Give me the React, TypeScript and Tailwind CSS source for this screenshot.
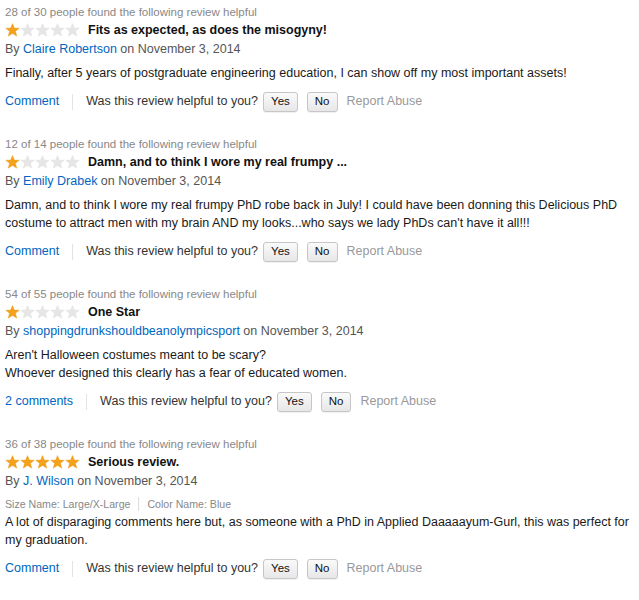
import React from "react";

function Star({ filled }: { filled: boolean }) {
  return (
    <svg width="15" height="14" viewBox="0 0 24 23" className="shrink-0">
      <polygon
        points="12,0.8 15.1,8.2 23.2,8.6 16.9,13.7 19.1,21.6 12,17.1 4.9,21.6 7.1,13.7 0.8,8.6 8.9,8.2"
        fill={filled ? "#f4a21b" : "#e6e6e6"}
        stroke={filled ? "#e59512" : "#dedede"}
        strokeWidth="0.6"
      />
    </svg>
  );
}

function Stars({ n }: { n: number }) {
  return (
    <div className="flex items-center">
      {[0, 1, 2, 3, 4].map((i) => (
        <Star key={i} filled={i < n} />
      ))}
    </div>
  );
}

function Btn({ children }: { children: React.ReactNode }) {
  return (
    <span className="inline-flex h-[20px] items-center rounded-[3px] border border-[#c6c6c6] bg-gradient-to-b from-[#fafafa] to-[#e7e7e7] px-[7px] text-[11.5px] text-[#111] shadow-[0_1px_0_rgba(0,0,0,0.05)]">
      {children}
    </span>
  );
}

type Review = {
  helpful: string;
  stars: number;
  title: string;
  author: string;
  meta?: boolean;
  body: React.ReactNode;
  comment: string;
};

const reviews: Review[] = [
  {
    helpful: "28 of 30 people found the following review helpful",
    stars: 1,
    title: "Fits as expected, as does the misogyny!",
    author: "Claire Robertson",
    body: (
      <>
        Finally, after 5 years of postgraduate engineering education, I can show off my most important assets!
      </>
    ),
    comment: "Comment",
  },
  {
    helpful: "12 of 14 people found the following review helpful",
    stars: 1,
    title: "Damn, and to think I wore my real frumpy ...",
    author: "Emily Drabek",
    body: (
      <>
        Damn, and to think I wore my real frumpy PhD robe back in July! I could have been donning this Delicious PhD
        <br />
        costume to attract men with my brain AND my looks...who says we lady PhDs can't have it all!!!
      </>
    ),
    comment: "Comment",
  },
  {
    helpful: "54 of 55 people found the following review helpful",
    stars: 1,
    title: "One Star",
    author: "shoppingdrunkshouldbeanolympicsport",
    body: (
      <>
        Aren't Halloween costumes meant to be scary?
        <br />
        Whoever designed this clearly has a fear of educated women.
      </>
    ),
    comment: "2 comments",
  },
  {
    helpful: "36 of 38 people found the following review helpful",
    stars: 5,
    title: "Serious review.",
    author: "J. Wilson",
    meta: true,
    body: (
      <>
        A lot of disparaging comments here but, as someone with a PhD in Applied Daaaaayum-Gurl, this was perfect for
        <br />
        my graduation.
      </>
    ),
    comment: "Comment",
  },
];

function ReviewBlock({ r }: { r: Review }) {
  return (
    <div className="flex flex-col">
      <div className="text-[11.5px] leading-[18px] text-[#888]">{r.helpful}</div>
      <div className="flex h-[18px] items-center gap-[8px]">
        <Stars n={r.stars} />
        <span className="text-[12.5px] font-bold text-[#111]">{r.title}</span>
      </div>
      <div className="mt-[1px] text-[12.5px] leading-[19px] text-[#555]">
        By <span className="text-[#0066c0]">{r.author}</span> on November 3, 2014
      </div>
      {r.meta && (
        <div className="mt-[5px] flex items-center text-[10.6px] leading-[16px] text-[#888]">
          <span>Size Name: Large/X-Large</span>
          <span className="mx-[8px] h-[14px] w-px bg-[#ddd]" />
          <span>Color Name: Blue</span>
        </div>
      )}
      <div
        className={`${r.meta ? "mt-[1px]" : "mt-[5px]"} whitespace-nowrap text-[12.5px] leading-[18px] text-[#1a1a1a]`}
      >
        {r.body}
      </div>
      <div className="mt-[9px] flex h-[21px] items-center text-[12.5px]">
        <span className="text-[#0066c0]">{r.comment}</span>
        <span className="mx-[13px] h-[16px] w-px bg-[#e3e3e3]" />
        <span className="text-[#333]">Was this review helpful to you?</span>
        <span className="ml-[5px]">
          <Btn>Yes</Btn>
        </span>
        <span className="ml-[9px]">
          <Btn>No</Btn>
        </span>
        <span className="ml-[9px] text-[#999]">Report Abuse</span>
      </div>
    </div>
  );
}

export default function App() {
  return (
    <div
      className="min-h-[600px] w-[639px] bg-white pl-[5px] pt-[3px]"
      style={{ fontFamily: '"Liberation Sans", Arial, sans-serif' }}
    >
      <div className="flex flex-col gap-[23px]">
        {reviews.map((r, i) => (
          <ReviewBlock key={i} r={r} />
        ))}
      </div>
    </div>
  );
}
